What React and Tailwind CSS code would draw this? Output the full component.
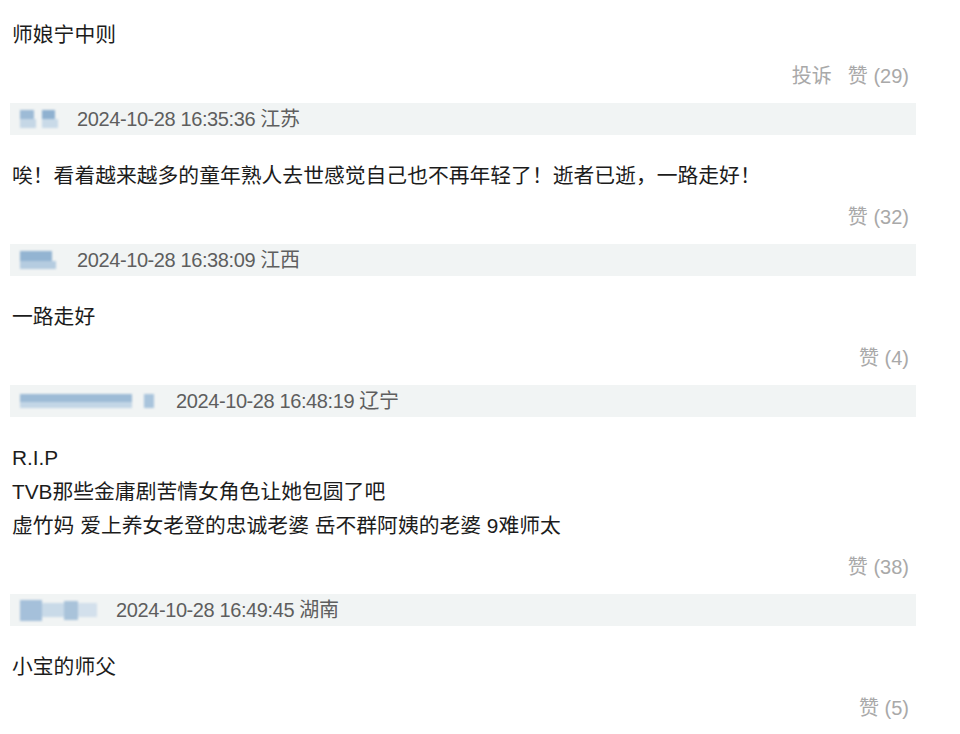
import React from "react";

// blurred user names, drawn as soft blocks laid out in flex rows
const NameBlur = ({ kind }) => {
  if (kind === 1)
    return (
      <div className="w-[38px] flex gap-[6px] blur-[1.2px]">
        <div className="flex flex-col">
          <div className="w-[14px] h-[9px] bg-[#9dbbd6]" />
          <div className="w-[16px] h-[9px] bg-[#c5d7e6]" />
        </div>
        <div className="flex flex-col">
          <div className="w-[13px] h-[9px] bg-[#8fb1d0]" />
          <div className="w-[16px] h-[9px] bg-[#c9dae8]" />
        </div>
      </div>
    );
  if (kind === 2)
    return (
      <div className="w-[38px] flex flex-col blur-[1.2px]">
        <div className="w-[32px] h-[10px] bg-[#93b4d2]" />
        <div className="w-[36px] h-[8px] bg-[#b5cce0]" />
      </div>
    );
  if (kind === 3)
    return (
      <div className="w-[137px] flex items-start gap-[12px] blur-[1.2px]">
        <div className="flex flex-col">
          <div className="w-[112px] h-[8px] bg-[#9dbbd6]" />
          <div className="w-[112px] h-[6px] bg-[#c3d6e6]" />
        </div>
        <div className="w-[10px] h-[14px] bg-[#a9c4dc]" />
      </div>
    );
  return (
    <div className="w-[77px] flex items-center blur-[1.2px]">
      <div className="w-[22px] h-[21px] bg-[#a5c0da]" />
      <div className="w-[22px] h-[14px] bg-[#c9dae8]" />
      <div className="w-[14px] h-[19px] bg-[#a9c3da]" />
      <div className="w-[19px] h-[14px] bg-[#d3e0ec]" />
    </div>
  );
};

const comments = [
  {
    name: 1,
    time: "2024-10-28 16:35:36",
    loc: "江苏",
    lines: ["唉！看着越来越多的童年熟人去世感觉自己也不再年轻了！逝者已逝，一路走好！"],
    likes: 32,
  },
  {
    name: 2,
    time: "2024-10-28 16:38:09",
    loc: "江西",
    lines: ["一路走好"],
    likes: 4,
  },
  {
    name: 3,
    time: "2024-10-28 16:48:19",
    loc: "辽宁",
    lines: [
      "R.I.P",
      "TVB那些金庸剧苦情女角色让她包圆了吧",
      "虚竹妈 爱上养女老登的忠诚老婆 岳不群阿姨的老婆 9难师太",
    ],
    likes: 38,
  },
  {
    name: 4,
    time: "2024-10-28 16:49:45",
    loc: "湖南",
    lines: ["小宝的师父"],
    likes: 5,
  },
];

const LikeRow = ({ likes, report }) => (
  <div className="w-[916px] mt-[7px] mb-[10px] pr-[7px] flex justify-end gap-[16px] text-[20px] leading-[34px] text-[#a9a9a9]">
    {report && <span>投诉</span>}
    <span>赞 ({likes})</span>
  </div>
);

const Body = ({ lines, first }) => (
  <div className={`${first ? "pt-[18px]" : "pt-[24px]"} pl-[12px] text-[20.8px] leading-[34px] text-[#1c1c1c]`}>
    {lines.map((l, i) => (
      <p key={i} className="whitespace-pre">{l}</p>
    ))}
  </div>
);

export default function App() {
  return (
    <div className="w-[960px] min-h-[734px] bg-white font-['Liberation_Sans','Noto_Sans_CJK_SC',sans-serif]">
      <Body lines={["师娘宁中则"]} first />
      <LikeRow likes={29} report />

      {comments.map((c, i) => (
        <div key={i}>
          <div className="ml-[10px] w-[906px] h-[32px] bg-[#f1f4f4] flex items-center pl-[10px] gap-[19px]">
            <NameBlur kind={c.name} />
            <span className="text-[20px] tracking-[-0.4px] text-[#5e5e5e]">
              {c.time} {c.loc}
            </span>
          </div>
          <Body lines={c.lines} />
          <LikeRow likes={c.likes} />
        </div>
      ))}
    </div>
  );
}
